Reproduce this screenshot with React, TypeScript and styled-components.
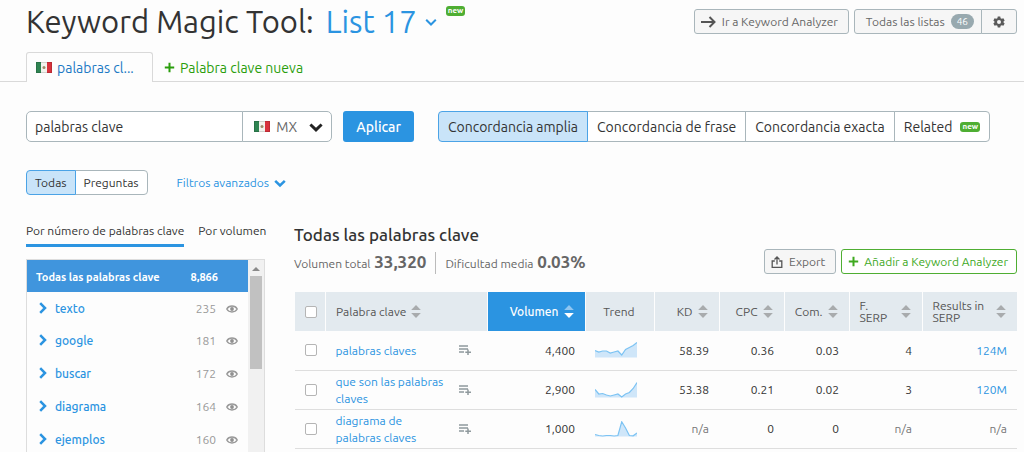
import React from 'react';
import styled, { createGlobalStyle, css } from 'styled-components';

const Global = createGlobalStyle`
  *, *::before, *::after { box-sizing: border-box; }
  body { margin: 0; background: #fdfdfd; color: #333; font-family: Ubuntu, "Noto Sans", "Open Sans", sans-serif; font-size: 12px; line-height: 16px; overflow: hidden; }
  button, input, select { font: inherit; color: inherit; margin: 0; }
  button { cursor: pointer; white-space: nowrap; }
  a { color: #2b94e1; text-decoration: none; }
  svg { display: block; flex: none; }
  h1, h2, p, ul { margin: 0; padding: 0; font-weight: 400; }
`;

const Page = styled.div`height: 100vh; overflow: hidden;`;

const Header = styled.header`
  display: flex;
  justify-content: space-between;
  align-items: flex-start;
  padding: 2px 7px 0 26px;
`;
const Title = styled.h1`
  display: flex;
  font-size: 31px;
  line-height: 40px;
  white-space: nowrap;
`;
const ListButton = styled.button`
  display: flex;
  align-items: center;
  gap: 8px;
  margin-left: 12px;
  padding: 0;
  border: 0;
  background: none;
  color: #2b94e1;
`;
const NewBadge = styled.span<{ $raised?: boolean }>`
  align-self: ${p => (p.$raised ? 'flex-start' : 'center')};
  margin: ${p => (p.$raised ? '4px 0 0 9px' : '0 0 0 8px')};
  padding: 0 2px;
  border-radius: 3px;
  background: #4fae33;
  color: #fff;
  font-size: 8px;
  font-weight: 700;
  line-height: 10px;
`;
const HeaderActions = styled.div`display: flex; gap: 5px; padding-top: 7px;`;

const OutlineButton = styled.button<{ $tone?: 'green' }>`
  display: flex;
  align-items: center;
  gap: 6px;
  height: 25px;
  padding: 0 10px 0 6px;
  border: 1px solid #a9b6bb;
  border-radius: 3px;
  background: #f6f6f6;
  color: #666;
  font-size: 12px;
  ${p => p.$tone === 'green' && css`
    gap: 5px;
    padding: 0 8px 0 6px;
    border-color: #4fae33;
    background: #fff;
    color: #3fa91f;
  `}
`;
const Joined = styled.div`
  display: flex;
  button:first-child { border-radius: 3px 0 0 3px; padding: 0 7px 0 11px; }
  button:last-child { border-radius: 0 3px 3px 0; margin-left: -1px; padding: 0 11px; }
`;
const Count = styled.span`
  padding: 0 6px;
  border-radius: 8px;
  background: #98a9af;
  color: #fff;
  font-size: 10px;
  line-height: 15px;
`;

const Tabs = styled.nav`
  display: flex;
  align-items: flex-end;
  margin-top: 10px;
  padding-left: 26px;
  box-shadow: inset 0 -1px #d9d9d9;
`;
const Tab = styled.button<{ $active?: boolean }>`
  display: flex;
  align-items: center;
  gap: 5px;
  height: 30px;
  padding: 0 10px;
  border: 1px solid transparent;
  border-bottom: 0;
  background: none;
  color: #2a9d0c;
  font-size: 14px;
  ${p => p.$active && css`
    width: 127px;
    padding: 0 9px;
    border-color: #d9d9d9;
    border-radius: 3px 3px 0 0;
    background: #fdfdfd;
    color: #1b79c4;
  `}
`;

const SearchRow = styled.form`display: flex; padding: 29px 34px 0 26px;`;
const Query = styled.input`
  width: 220px;
  height: 31px;
  padding: 0 8px;
  border: 1px solid #a9b6bb;
  border-radius: 5px 0 0 5px;
  background: #fff;
  font-size: 14px;
`;
const Country = styled.label`
  display: flex;
  align-items: center;
  gap: 6px;
  width: 91px;
  margin-left: -1px;
  padding: 0 8px 0 11px;
  border: 1px solid #a9b6bb;
  border-radius: 0 5px 5px 0;
  background: #fff;
`;
const CountrySelect = styled.select`
  flex: 1;
  min-width: 0;
  padding: 0;
  border: 0;
  appearance: none;
  background: none;
  color: #666;
  font-size: 14px;
`;
const Apply = styled.button`
  height: 31px;
  margin: 0 24px 0 11px;
  padding: 0 13px;
  border: 0;
  border-radius: 3px;
  background: #2b94e1;
  color: #fff;
  font-size: 14px;
  font-weight: 500;
`;
const Segments = styled.div`display: flex;`;
const Segment = styled.button<{ $active?: boolean; $small?: boolean }>`
  position: relative;
  display: flex;
  align-items: center;
  height: ${p => (p.$small ? 25 : 31)}px;
  padding: 0 ${p => (p.$small ? 8 : 9)}px;
  border: 1px solid #a9b6bb;
  background: #fff;
  font-size: ${p => (p.$small ? 12 : 14)}px;
  & + & { margin-left: -1px; }
  &:first-child { border-radius: 4px 0 0 4px; }
  &:last-child { border-radius: 0 4px 4px 0; }
  ${p => p.$active && css`z-index: 1; border-color: #4ba3e6; background: #c9e4f9;`}
`;

const FilterRow = styled.div`display: flex; align-items: center; gap: 29px; padding: 28px 26px 0;`;
const LinkButton = styled.button`
  display: flex;
  align-items: center;
  gap: 5px;
  padding: 0;
  border: 0;
  background: none;
  color: #2b94e1;
  font-size: 12px;
`;

const Body = styled.div`display: flex; gap: 29px; padding: 27px 7px 0 26px;`;
const Side = styled.aside`flex: none; width: 239px;`;
const GroupTabs = styled.div`display: flex; gap: 14px;`;
const GroupTab = styled.button<{ $active?: boolean }>`
  height: 25px;
  padding: 0 0 4px;
  border: 0;
  border-bottom: 3px solid ${p => (p.$active ? '#2b94e1' : 'transparent')};
  background: none;
  font-size: 12px;
`;
const Panel = styled.div`
  display: flex;
  height: 240px;
  margin-top: 12px;
  border: 1px solid #ddd;
  overflow: hidden;
`;
const Groups = styled.ul`flex: 1; list-style: none;`;
const AllGroups = styled.li`
  display: flex;
  align-items: center;
  justify-content: space-between;
  height: 32px;
  padding: 2px 30px 0 9px;
  background: #4095dd;
  color: #fff;
  font-size: 11px;
  font-weight: 600;
`;
const Group = styled.li`
  display: flex;
  align-items: center;
  height: 33px;
  padding: 0 10px 0 12px;
  color: #999;
  a { flex: 1; margin-left: 8px; font-size: 12px; font-weight: 500; }
  span { margin-right: 10px; }
  & + & { height: 32px; }
  & + & + & { height: 33px; }
`;
const ScrollTrack = styled.div`
  display: flex;
  flex-direction: column;
  align-items: center;
  width: 16px;
  padding-top: 7px;
  background: #f1f1f1;
`;
const ScrollThumb = styled.div`width: 12px; height: 93px; margin-top: 5px; background: #c1c1c1;`;

const Main = styled.main`flex: 1; min-width: 0;`;
const Heading = styled.h2`font-size: 17px; font-weight: 500; line-height: 26px;`;
const SummaryRow = styled.div`display: flex; justify-content: space-between; align-items: flex-start; height: 44px;`;
const Stats = styled.div`
  display: flex;
  align-items: center;
  padding-top: 4px;
  color: #666;
  font-size: 12px;
  line-height: 20px;
  white-space: nowrap;
`;
const Stat = styled.p`
  strong { margin-left: 1px; font-size: 17px; font-weight: 700; }
  & + & { margin-left: 9px; padding-left: 9px; border-left: 1px solid #bbb; }
`;
const TableActions = styled.div`display: flex; gap: 5px; padding-top: 1px;`;

const Table = styled.table`
  width: 100%;
  border-collapse: collapse;
  table-layout: fixed;
`;
const Th = styled.th<{ $active?: boolean }>`
  height: 39px;
  padding: 0 11px 0 10px;
  border-left: 1px solid #fdfdfd;
  background: ${p => (p.$active ? '#2b94e1' : '#e3eaef')};
  color: ${p => (p.$active ? '#fff' : '#555')};
  font-size: 12px;
  font-weight: ${p => (p.$active ? 500 : 400)};
  line-height: 12px;
  text-align: left;
`;
const HeadLabel = styled.div<{ $justify?: string }>`
  display: flex;
  align-items: center;
  justify-content: ${p => p.$justify ?? 'flex-end'};
  gap: 5px;
`;
const Td = styled.td<{ $left?: boolean }>`
  height: 39px;
  padding: 0 10px;
  border-bottom: 1px solid #dedede;
  font-size: 12px;
  line-height: 17px;
  text-align: ${p => (p.$left ? 'left' : 'right')};
`;
const Keyword = styled.div`
  display: flex;
  align-items: center;
  justify-content: space-between;
  padding-right: 6px;
  a { max-width: 110px; }
`;
const Muted = styled.span`color: #777;`;
const Check = styled.input`
  display: block;
  width: 12px;
  height: 12px;
  appearance: none;
  border: 1px solid #b5b5b5;
  border-radius: 2px;
  background: #fff;
`;

const Flag = () => (
  <svg width="16" height="11" viewBox="0 0 16 11" aria-hidden="true">
    <path fill="#2f8452" d="M0 0h5v11H0z" />
    <path fill="#f3f3ee" d="M5 0h6v11H5z" />
    <path fill="#d8323c" d="M11 0h5v11h-5z" />
    <circle cx="8" cy="5.500" r="1.500" fill="#9b8a68" />
    <path fill="none" stroke="#0002" d="M.5.5h15v10H.5z" />
  </svg>
);
const Chevron = ({ w = 12, stroke = 2.5, color = 'currentColor' }) => (
  <svg width={w} height={w} viewBox="0 0 12 12" fill="none" stroke={color} strokeWidth={stroke} aria-hidden="true">
    <path d="M1.200 3.800 6 8.500l4.800-4.700" />
  </svg>
);
const ChevronRight = () => (
  <svg width="8" height="14" viewBox="0 0 8 14" fill="none" stroke="#2b94e1" strokeWidth="2.500" aria-hidden="true">
    <path d="M1.200 1.200 6 6l-4.800 4.800" />
  </svg>
);
const Plus = () => (
  <svg width="11" height="11" viewBox="0 0 11 11" fill="none" stroke="currentColor" strokeWidth="2" aria-hidden="true">
    <path d="M5.500 .8v9.400M.8 5.500h9.400" />
  </svg>
);
const Arrow = () => (
  <svg width="15" height="12" viewBox="0 0 15 12" fill="none" stroke="#555" strokeWidth="2" aria-hidden="true">
    <path d="M0 6h13M8.500 1l5 5-5 5" />
  </svg>
);
const Gear = () => (
  <svg width="12" height="12" viewBox="0 0 24 24" fill="#5a5a5a" aria-hidden="true">
    <path fillRule="evenodd" d="M9.500 1h5l.7 3.300 2.400 1.400 3.200-1 2.500 4.300-2.500 2.300v1.400l2.500 2.300-2.500 4.300-3.200-1-2.400 1.400-.7 3.300h-5l-.7-3.300-2.400-1.400-3.200 1L.7 15l2.500-2.300v-1.400L.7 9l2.500-4.300 3.200 1 2.400-1.400zM12 8a4 4 0 1 0 0 8 4 4 0 0 0 0-8z" />
  </svg>
);
const Export = () => (
  <svg width="12" height="12" viewBox="0 0 11 12" fill="none" stroke="#555" strokeWidth="1.300" aria-hidden="true">
    <path d="M3.300 5H.7v6.300h9.600V5H7.700M5.500 8.500V1.200M3 3.500l2.500-2.500L8 3.500" />
  </svg>
);
const Eye = () => (
  <svg width="12" height="8" viewBox="0 0 12 8" aria-hidden="true">
    <path fill="#fff" stroke="#999" strokeWidth="1.500" d="M.8 4C3 .1 9 .1 11.200 4 9 7.900 3 7.900.8 4z" />
    <circle cx="6" cy="4" r="1.900" fill="#909090" />
  </svg>
);
const AddToList = () => (
  <svg width="12" height="10" viewBox="0 0 12 10" fill="none" stroke="#8f999d" strokeWidth="1.500" aria-hidden="true">
    <path d="M0 1h9M0 4h9M0 7h5M9 4.500v5.500M6.300 7.200H12" />
  </svg>
);
const Sort = ({ active = false }) => (
  <svg width="10" height="13" viewBox="0 0 10 13" aria-hidden="true">
    <path fill={active ? '#8fc6f1' : '#a8abad'} d="M5 0l4.800 5H.2z" />
    <path fill={active ? '#fff' : '#a8abad'} d="M5 13l4.800-5H.2z" />
  </svg>
);
const Trend = ({ points }: { points: number[] }) => {
  const line = points.map((y, i) => `${i ? 'L' : 'M'}${(i * 42) / (points.length - 1)} ${y}`).join('');
  return (
    <svg width="42" height="16" viewBox="0 0 42 16" role="img" aria-label="Trend">
      <path fill="#cfe6f9" d={`${line}V15.500H0z`} />
      <path fill="none" stroke="#7cc3f3" strokeWidth="1.200" d={line} />
    </svg>
  );
};

const groups = [['texto', 235], ['google', 181], ['buscar', 172], ['diagrama', 164], ['ejemplos', 160]] as const;

const rows = [
  { keyword: 'palabras claves', volume: '4,400', trend: [8.5, 10, 9, 9, 11, 10, 9, 13, 7.5, 5.5, 3.5, 0.6], cells: ['58.39', '0.36', '0.03', '4', '124M'] },
  { keyword: 'que son las palabras claves', volume: '2,900', trend: [7.5, 12, 11.5, 13, 14, 13, 12, 15, 12, 10.5, 6.5, 0.6], cells: ['53.38', '0.21', '0.02', '3', '120M'] },
  { keyword: 'diagrama de palabras claves', volume: '1,000', trend: [13.5, 14.5, 15, 14.5, 14.5, 15, 14.5, 0.8, 7, 14.5, 14.8, 12], cells: ['n/a', '0', '0', 'n/a', 'n/a'] },
];

const Value = ({ text }: { text: string }) => {
  if (text === 'n/a') return <Muted>{text}</Muted>;
  if (text.endsWith('M')) return <a href="#results">{text}</a>;
  return <>{text}</>;
};

export default function App() {
  return (
    <Page>
      <Global />
      <Header>
        <Title>
          Keyword Magic Tool:
          <ListButton type="button">List 17 <Chevron stroke={2} /></ListButton>
          <NewBadge $raised>new</NewBadge>
        </Title>
        <HeaderActions>
          <OutlineButton type="button"><Arrow />Ir a Keyword Analyzer</OutlineButton>
          <Joined>
            <OutlineButton type="button">Todas las listas <Count>46</Count></OutlineButton>
            <OutlineButton type="button" aria-label="Configuración"><Gear /></OutlineButton>
          </Joined>
        </HeaderActions>
      </Header>

      <Tabs>
        <Tab type="button" $active><Flag />palabras cl...</Tab>
        <Tab type="button"><Plus />Palabra clave nueva</Tab>
      </Tabs>

      <SearchRow onSubmit={e => e.preventDefault()}>
        <Query type="text" aria-label="Palabra clave" defaultValue="palabras clave" />
        <Country>
          <Flag />
          <CountrySelect aria-label="País" defaultValue="MX"><option>MX</option></CountrySelect>
          <Chevron w={14} color="#222" />
        </Country>
        <Apply type="submit">Aplicar</Apply>
        <Segments>
          <Segment type="button" $active>Concordancia amplia</Segment>
          <Segment type="button">Concordancia de frase</Segment>
          <Segment type="button">Concordancia exacta</Segment>
          <Segment type="button">Related <NewBadge>new</NewBadge></Segment>
        </Segments>
      </SearchRow>

      <FilterRow>
        <Segments>
          <Segment type="button" $small $active>Todas</Segment>
          <Segment type="button" $small>Preguntas</Segment>
        </Segments>
        <LinkButton type="button">Filtros avanzados <Chevron /></LinkButton>
      </FilterRow>

      <Body>
        <Side>
          <GroupTabs>
            <GroupTab type="button" $active>Por número de palabras clave</GroupTab>
            <GroupTab type="button">Por volumen</GroupTab>
          </GroupTabs>
          <Panel>
            <Groups>
              <AllGroups><span>Todas las palabras clave</span><span>8,866</span></AllGroups>
              {groups.map(([name, count]) => (
                <Group key={name}><ChevronRight /><a href={`#${name}`}>{name}</a><span>{count}</span><Eye /></Group>
              ))}
            </Groups>
            <ScrollTrack>
              <svg width="8" height="4" viewBox="0 0 8 4" aria-hidden="true"><path fill="#8a8a8a" d="M4 0l4 4H0z" /></svg>
              <ScrollThumb />
            </ScrollTrack>
          </Panel>
        </Side>

        <Main>
          <Heading>Todas las palabras clave</Heading>
          <SummaryRow>
            <Stats>
              <Stat>Volumen total <strong>33,320</strong></Stat>
              <Stat>Dificultad media <strong>0.03%</strong></Stat>
            </Stats>
            <TableActions>
              <OutlineButton type="button"><Export />Export</OutlineButton>
              <OutlineButton type="button" $tone="green"><Plus />Añadir a Keyword Analyzer</OutlineButton>
            </TableActions>
          </SummaryRow>
          <Table>
            <colgroup>
              <col style={{ width: 31 }} /><col /><col style={{ width: 98 }} /><col style={{ width: 69 }} />
              <col style={{ width: 65 }} /><col style={{ width: 65 }} /><col style={{ width: 65 }} />
              <col style={{ width: 73 }} /><col style={{ width: 95 }} />
            </colgroup>
            <thead>
              <tr>
                <Th><Check type="checkbox" aria-label="Seleccionar todo" /></Th>
                <Th><HeadLabel $justify="flex-start">Palabra clave <Sort /></HeadLabel></Th>
                <Th $active><HeadLabel>Volumen <Sort active /></HeadLabel></Th>
                <Th><HeadLabel $justify="center">Trend</HeadLabel></Th>
                <Th><HeadLabel>KD <Sort /></HeadLabel></Th>
                <Th><HeadLabel>CPC <Sort /></HeadLabel></Th>
                <Th><HeadLabel>Com. <Sort /></HeadLabel></Th>
                <Th><HeadLabel $justify="space-between">F. SERP <Sort /></HeadLabel></Th>
                <Th><HeadLabel $justify="space-between">Results in SERP <Sort /></HeadLabel></Th>
              </tr>
            </thead>
            <tbody>
              {rows.map(row => (
                <tr key={row.keyword}>
                  <Td $left><Check type="checkbox" aria-label={row.keyword} /></Td>
                  <Td $left><Keyword><a href="#keyword">{row.keyword}</a><AddToList /></Keyword></Td>
                  <Td>{row.volume}</Td>
                  <Td><Trend points={row.trend} /></Td>
                  {row.cells.map((cell, i) => <Td key={i}><Value text={cell} /></Td>)}
                </tr>
              ))}
            </tbody>
          </Table>
        </Main>
      </Body>
    </Page>
  );
}
